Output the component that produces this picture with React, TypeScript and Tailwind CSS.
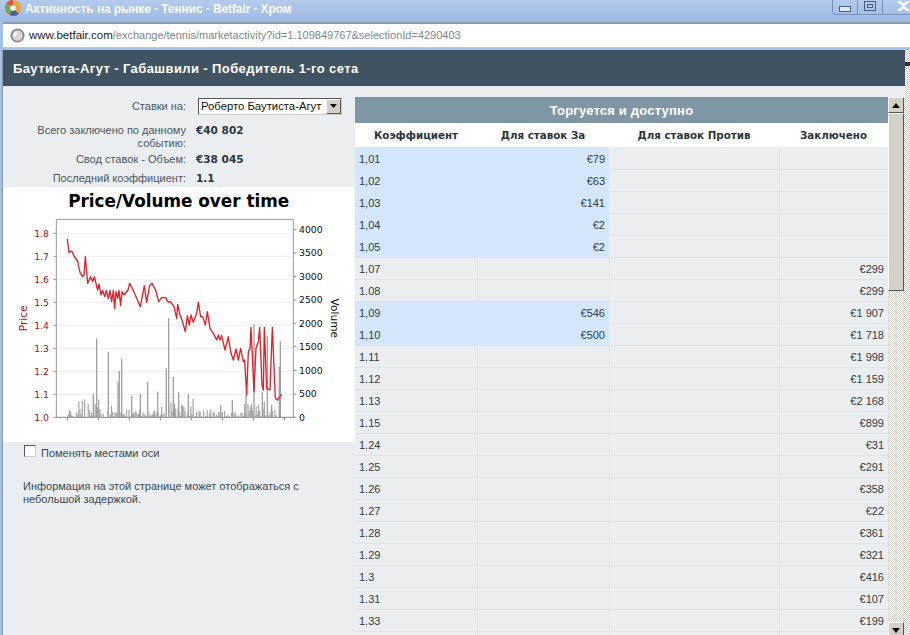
import React from 'react';

const FONT = "font-['Liberation_Sans',Arial,sans-serif]";

type Row = { odds: string; back?: string; matched?: string; blue?: boolean };

const rows: Row[] = [
  { odds: '1,01', back: '€79', blue: true },
  { odds: '1,02', back: '€63', blue: true },
  { odds: '1,03', back: '€141', blue: true },
  { odds: '1,04', back: '€2', blue: true },
  { odds: '1,05', back: '€2', blue: true },
  { odds: '1.07', matched: '€299' },
  { odds: '1.08', matched: '€299' },
  { odds: '1,09', back: '€546', matched: '€1 907', blue: true },
  { odds: '1,10', back: '€500', matched: '€1 718', blue: true },
  { odds: '1.11', matched: '€1 998' },
  { odds: '1.12', matched: '€1 159' },
  { odds: '1.13', matched: '€2 168' },
  { odds: '1.15', matched: '€899' },
  { odds: '1.24', matched: '€31' },
  { odds: '1.25', matched: '€291' },
  { odds: '1.26', matched: '€358' },
  { odds: '1.27', matched: '€22' },
  { odds: '1.28', matched: '€361' },
  { odds: '1.29', matched: '€321' },
  { odds: '1.3', matched: '€416' },
  { odds: '1.31', matched: '€107' },
  { odds: '1.33', matched: '€199' },
  { odds: '' },
];

// chart coordinates are 3x screen pixels
const pricePoints =
  '202,162 207,202 215,198 225,218 233,228 236,245 240,262 248,275 252,270 256,215 263,295 272,275 278,290 283,275 293,315 297,297 303,330 308,316 314,335 319,316 325,340 330,316 335,350 340,316 344,370 348,320 353,340 357,316 362,362 366,320 372,330 384,315 389,295 398,312 410,340 421,365 433,302 440,352 449,302 456,295 467,315 476,350 485,338 497,338 505,352 511,350 522,365 530,400 533,358 540,390 546,405 556,440 562,392 568,420 573,390 580,412 590,385 595,352 602,395 608,395 616,420 622,380 630,430 640,445 650,465 655,450 660,465 665,452 675,495 685,455 693,505 700,525 708,492 715,525 722,490 730,530 734,525 740,630 745,500 750,490 753,427 762,620 768,490 775,470 779,427 786,600 790,615 793,427 800,610 810,615 817,427 826,640 832,645 845,628';

const spikes: [number, number][] = [
  [280, 628], [290, 460], [325, 500], [354, 590], [358, 558], [365, 522], [395, 632], [421, 627],
  [443, 590], [473, 620], [499, 550], [506, 400], [520, 575], [536, 622], [565, 628], [662, 660],
  [697, 645], [738, 630], [762, 417], [787, 620], [802, 452], [815, 660], [838, 545], [841, 468],
];

function smallBars() {
  const bars: [number, number][] = [];
  for (let x = 205; x < 845; x += 3.5) {
    const s = Math.sin(x * 12.9898) * 43758.5453;
    const r = s - Math.floor(s);
    if (r < 0.22) continue;
    const busy = (x > 225 && x < 350) || (x > 480 && x < 590) || (x > 730 && x < 845);
    const h = r * r * (busy ? 55 : 24);
    bars.push([x, 697 - h]);
  }
  return bars;
}

const priceTicks = [
  ['1.8', 145], ['1.7', 214], ['1.6', 283], ['1.5', 352], ['1.4', 421],
  ['1.3', 490], ['1.2', 559], ['1.1', 628], ['1.0', 697],
] as const;

const volumeTicks = [
  ['4000', 133], ['3500', 204], ['3000', 274], ['2500', 345], ['2000', 415],
  ['1500', 485], ['1000', 556], ['500', 627], ['0', 697],
] as const;

function Chart() {
  return (
    <svg viewBox="9 6 1056 765" className="block w-[352px] h-[255px]" fontFamily="'DejaVu Sans', sans-serif">
      <rect x="9" y="6" width="1056" height="765" fill="#fff" />
      <text x="536" y="66" textAnchor="middle" fontSize="50.5" fontWeight="700" fill="#000">
        Price/Volume over time
      </text>
      {priceTicks.map(([label, y]) => (
        <g key={label}>
          <line x1="169" x2="880" y1={y} y2={y} stroke="#eceef0" strokeWidth="3" />
          <line x1="160" x2="169" y1={y} y2={y} stroke="#999" strokeWidth="3" />
          <text x="147" y={y + 10} textAnchor="end" fontSize="28" fill="#a5141e">{label}</text>
        </g>
      ))}
      <path d="M169 103H880V697" fill="none" stroke="#999" strokeWidth="3" />
      <line x1="169" x2="169" y1="103" y2="697" stroke="#999" strokeWidth="3" />
      <line x1="169" x2="880" y1="697" y2="697" stroke="#888" strokeWidth="3" />
      {[202, 295, 388, 481, 574, 667, 760, 853].map((x) => (
        <line key={x} x1={x} x2={x} y1="697" y2="706" stroke="#888" strokeWidth="3" />
      ))}
      {volumeTicks.map(([label, y]) => (
        <g key={label}>
          <line x1="880" x2="889" y1={y} y2={y} stroke="#888" strokeWidth="3" />
          <text x="897" y={y + 10} fontSize="28" fill="#111">{label}</text>
        </g>
      ))}
      {smallBars().map(([x, y]) => (
        <line key={x} x1={x} x2={x} y1="697" y2={y} stroke="#a3a3a3" strokeWidth="3.5" />
      ))}
      {spikes.map(([x, y]) => (
        <line key={x} x1={x} x2={x} y1="697" y2={y} stroke="#a0a0a0" strokeWidth="4" />
      ))}
      <polyline points={pricePoints} fill="none" stroke="#e0202c" strokeWidth="4" strokeLinejoin="round" />
      <text transform="translate(80 400) rotate(-90)" textAnchor="middle" fontSize="32" fill="#a5141e">Price</text>
      <text transform="translate(992 400) rotate(90)" textAnchor="middle" fontSize="32" fill="#111">Volume</text>
    </svg>
  );
}

function ArrowButton({ down }: { down?: boolean }) {
  return (
    <div className="h-[16px] w-[16px] shrink-0 bg-[#d4d0c8] border-t border-l border-t-white border-l-white border-r border-b border-r-[#555] border-b-[#555] flex items-center justify-center">
      <svg width="8" height="5" viewBox="0 0 8 5">
        <path d={down ? 'M0 0H8L4 5Z' : 'M0 5H8L4 0Z'} fill="#000" />
      </svg>
    </div>
  );
}

function InfoRow({ label, children }: { label: React.ReactNode; children: React.ReactNode }) {
  return (
    <div className="flex gap-[10px]">
      <div className="w-[183px] text-right text-[#4a5660] leading-[13px]">{label}</div>
      <div className="font-['DejaVu_Sans',sans-serif] font-bold text-[10.5px] text-[#2b3640] leading-[13px]">{children}</div>
    </div>
  );
}

export default function App() {
  return (
    <div className={`${FONT} w-[910px] h-[635px] overflow-hidden flex flex-col bg-[#a6bfe6] text-[11px]`}>
      {/* title bar */}
      <div className="h-[22px] shrink-0 flex items-center pl-[5px] bg-gradient-to-b from-[#b4cbee] to-[#9db8e2] relative">
        <svg width="16" height="16" viewBox="0 0 14 14" className="mr-[4px] -mt-[6px]">
          <circle cx="7" cy="7" r="7" fill="#e8a33a" />
          <path d="M7 7L1 3A7 7 0 0 1 7 0Z" fill="#d9534a" />
          <path d="M7 7L1 3A7 7 0 0 0 4 13Z" fill="#6cab52" />
          <path d="M7 7L4 13A7 7 0 0 0 12 12Z" fill="#4a5f9a" />
          <circle cx="7" cy="7" r="2.5" fill="#f4f0e8" />
        </svg>
        <span className="font-bold text-white text-[12px] -mt-[4px] opacity-95 tracking-[-0.1px]">Активность на рынке - Теннис - Betfair - Хром</span>
        <div className="absolute right-0 top-0 h-[15px] flex border-b border-l border-[#7a90b8] rounded-bl-[4px]">
          <div className="w-[25px] flex items-end justify-center pb-[2px] border-r border-[#7a90b8]">
            <div className="w-[12px] h-[6px] border border-[#4a5f80] bg-[#dfe8f6]" />
          </div>
          <div className="w-[25px] flex items-start justify-center pt-[1px] border-r border-[#7a90b8]">
            <div className="w-[12px] h-[10px] border border-[#4a5f80] flex items-center justify-center">
              <div className="w-[6px] h-[4px] border border-[#4a5f80]" />
            </div>
          </div>
          <div className="w-[27px] flex items-start justify-end pt-[1px]">
            <svg width="13" height="10" viewBox="0 0 13 10">
              <path d="M1 0L6.5 4L12 0M1 10L6.5 6L12 10" fill="none" stroke="#fff" strokeWidth="2.5" />
            </svg>
          </div>
        </div>
      </div>

      {/* address bar */}
      <div className="h-[28px] shrink-0 flex pl-[3px] pr-0 pb-[2px] bg-[#a6bfe6]">
        <div className="flex-1 bg-white border-t-2 border-[#8c98aa] border-b border-b-[#c4c8ce] flex items-center pl-[7px] gap-[4px]">
          <svg width="15" height="15" viewBox="0 0 16 16">
            <circle cx="8" cy="8" r="6.5" fill="#d8d8d8" stroke="#8a8a8a" strokeWidth="2" />
            <path d="M5 4c2 0 3 1 3 2s-2 1-2 3-2 0-2-1 0-3 1-4Z" fill="#f4f4f4" />
          </svg>
          <span className="text-[11px] text-[#7d8790]">
            <span className="text-[#1c1c1c] text-[11.5px]">www.betfair.com</span>/exchange/tennis/marketactivity?id=1.109849767&amp;selectionId=4290403
          </span>
        </div>
      </div>

      {/* page */}
      <div className="flex-1 min-h-0 flex">
        <div className="w-[3px] shrink-0 bg-[#a6bfe6] border-r border-[#8c98aa]" />
        <div className="w-[902px] shrink-0 flex flex-col bg-[#ebeef1]">
          <div className="h-[36px] shrink-0 bg-[#3f5362] flex items-center pl-[10px] pt-[1px] font-bold text-white text-[13px] tracking-[0.4px]">
            Баутиста-Агут - Габашвили - Победитель 1-го сета
          </div>

          <div className="flex-1 min-h-0 flex">
            {/* left column */}
            <div className="w-[352px] shrink-0 flex flex-col">
              <div className="pt-[11px] flex flex-col">
                <div className="flex gap-[12px] items-center h-[18px]">
                  <div className="w-[183px] text-right text-[#4a5660]">Ставки на:</div>
                  <div className="w-[144px] h-[17px] bg-white border border-t-[#555] border-l-[#555] border-b-[#ccc] border-r-[#ccc] flex items-center justify-between pl-[2px] text-[#111] text-[11.3px]">
                    <span>Роберто Баутиста-Агут</span>
                    <div className="w-[15px] h-[15px] bg-[#d4d0c8] border-t border-l border-white border-r border-b border-r-[#555] border-b-[#555] flex items-center justify-center">
                      <svg width="7" height="4" viewBox="0 0 7 4"><path d="M0 0H7L3.5 4Z" fill="#000" /></svg>
                    </div>
                  </div>
                </div>
                <div className="mt-[9px] flex flex-col">
                  <InfoRow label={<>Всего заключено по данному<br />событию:</>}>€40 802</InfoRow>
                  <div className="mt-[3px]">
                    <InfoRow label="Свод ставок - Объем:">€38 045</InfoRow>
                  </div>
                  <div className="mt-[6px]">
                    <InfoRow label="Последний коэффициент:">1.1</InfoRow>
                  </div>
                </div>
              </div>
              <div className="mt-[2px]">
                <Chart />
              </div>
              <div className="flex items-start pl-[21px] pt-[3px] text-[#3d4850]">
                <div className="w-[12px] h-[12px] bg-white border border-t-[#555] border-l-[#555] border-b-[#ccc] border-r-[#ccc] mr-[5px]" />
                <span>Поменять местами оси</span>
              </div>
              <p className="pl-[20px] pr-[30px] mt-[18px] text-[#3d4850] leading-[13px]">
                Информация на этой странице может отображаться с небольшой задержкой.
              </p>
            </div>

            {/* market table */}
            <div className="flex-1 min-w-0 pt-[11px] flex items-start">
              <div className="w-[533px] shrink-0">
                <div className="h-[26px] bg-[#7f97a5] pt-[1px] text-white font-bold text-[13px] flex items-center justify-center tracking-[0.2px]">
                  Торгуется и доступно
                </div>
                <table className="w-[533px] table-fixed border-collapse text-[#333c42]">
                  <colgroup>
                    <col className="w-[122px]" />
                    <col className="w-[132px]" />
                    <col className="w-[170px]" />
                    <col className="w-[109px]" />
                  </colgroup>
                  <thead>
                    <tr className="h-[24px] bg-white font-['DejaVu_Sans',sans-serif] text-[10.3px] text-[#2b3640]">
                      <th className="font-bold pt-[2px]">Коэффициент</th>
                      <th className="font-bold pt-[2px]">Для ставок За</th>
                      <th className="font-bold pt-[2px]">Для ставок Против</th>
                      <th className="font-bold pt-[2px]">Заключено</th>
                    </tr>
                  </thead>
                  <tbody>
                    {rows.map((r, i) => (
                      <tr key={i} className="h-[22px] border-b border-[#e0e4e7]">
                        <td className={`pl-[4px] pt-[2px] ${r.blue ? 'bg-[#d4e6fa]' : 'border-r border-[#e0e4e7]'}`}>{r.odds}</td>
                        <td className={`text-right pr-[4px] pt-[2px] ${r.blue ? 'bg-[#d4e6fa]' : 'border-r border-[#e0e4e7]'}`}>{r.back}</td>
                        <td className="border-r border-[#e0e4e7]" />
                        <td className="text-right pr-[4px] pt-[2px]">{r.matched}</td>
                      </tr>
                    ))}
                  </tbody>
                </table>
              </div>
              {/* inner scrollbar */}
              <div className="w-[17px] shrink-0 h-[541px] flex flex-col bg-[repeating-conic-gradient(#d4d0c8_0_25%,#ffffff_0_50%)] bg-[length:2px_2px]">
                <ArrowButton />
                <div className="h-[178px] w-[16px] shrink-0 bg-[#d4cfc7] border-t border-l border-white border-r border-b border-r-[#555] border-b-[#555]" />
                <div className="flex-1" />
                <ArrowButton down />
              </div>
            </div>
          </div>
        </div>
        {/* outer scrollbar strip */}
        <div className="flex-1 relative bg-[repeating-conic-gradient(#d4d0c8_0_25%,#ffffff_0_50%)] bg-[length:2px_2px]">
          <div className="absolute left-0 top-[12px] w-[5px] h-[4px] bg-[#333]" />
        </div>
      </div>
    </div>
  );
}
